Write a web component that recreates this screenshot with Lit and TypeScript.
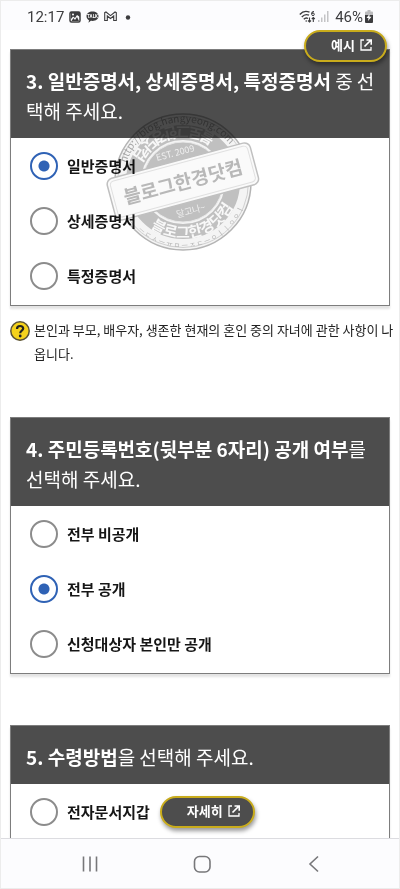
import { LitElement, html, css, svg } from "lit";
import { customElement, property } from "lit/decorators.js";

const sans = css`"Noto Sans CJK KR", "Noto Sans", sans-serif`;

@customElement("pill-button")
class PillButton extends LitElement {
  static styles = css`
    :host { display: inline-block; }
    .pill {
      display: flex; align-items: center; gap: 5px;
      height: 32px; padding: 0 13px 2px 25px;
      border: 2px solid #c9ac1c; border-radius: 16px;
      background: #4d4d4d; color: #fff;
      font: 700 13px/20px ${sans};
      box-shadow: 1px 3px 4px rgba(0, 0, 0, 0.4);
    }
    .icon { width: 12px; height: 12px; display: block; }
  `;
  render() {
    return html`<button class="pill" type="button">
      <slot></slot>
      <svg class="icon" viewBox="0 0 12 12" fill="none" stroke="#fff" aria-hidden="true">
        <path d="M4 1H1v10h10V8" stroke-width="1.3" />
        <path d="M4.500 7.500 10.500 1.500M6.500 1h4.800v4.800" stroke-width="1.7" />
      </svg>
    </button>`;
  }
}

@customElement("blog-stamp")
class BlogStamp extends LitElement {
  static styles = css`
    :host { display: block; pointer-events: none; mix-blend-mode: multiply; }
    .stamp { display: block; width: 100%; }
    text { font-family: ${sans}; text-anchor: middle; }
  `;
  render() {
    return html`<svg class="stamp" viewBox="0 0 160 150" aria-hidden="true">
      <defs>
        <path id="outerTop" d="M20 72A60 60 0 0 1 140 72" />
        <path id="outerLow" d="M14 72A66 66 0 0 0 146 72" />
        <path id="ring" d="M24 72A56 56 0 0 0 136 72" />
      </defs>
      <circle cx="80" cy="72" r="68" fill="#f4f4f4" stroke="#b4b4b4" stroke-width="1.5" />
      <circle cx="80" cy="72" r="65.5" fill="none" stroke="#d0d0d0" stroke-width="1" />
      <circle cx="80" cy="72" r="49.5" fill="none" stroke="#c0c0c0" stroke-width="15" />
      <circle cx="80" cy="72" r="40" fill="#c0c0c0" stroke="#e8e8e8" stroke-width="1" />
      <text font-size="10" fill="#a4a4a4" transform="rotate(-10 80 72)"><textPath href="#outerTop" startOffset="50%">http://blog.hangyeong.com</textPath></text>
      <text font-size="7" fill="#b4b4b4" transform="rotate(-12 80 72)"><textPath href="#outerLow" startOffset="50%">ㅡ ㄷ ㅅ ㅡ ㅠ ㅁ ㅡ ㅈ ㄷ ㅡ ㅇ ㅣ ㅣ ㅇ ㅇ ㅣ</textPath></text>
      ${[-14, 166].map((a) => svg`<text font-size="15" font-weight="700" fill="#f8f8f8" transform=${`rotate(${a} 80 72)`}><textPath href="#ring" startOffset="50%">블로그한경닷컴</textPath></text>`)}
      <g transform="rotate(-15 80 72)">
        <text x="80" y="45" font-size="9" fill="#efefef">EST. 2009</text>
        <text x="80" y="105" font-size="9" fill="#efefef">달고나~</text>
        <rect x="6" y="50" width="148" height="43" rx="6" fill="#fafafa" stroke="#c0c0c0" stroke-width="1.5" />
        <rect x="9" y="53" width="142" height="37" rx="4" fill="none" stroke="#e0e0e0" stroke-width="1" />
        <text x="80" y="79" font-size="19" font-weight="700" fill="#b8b8b8">블로그한경닷컴</text>
      </g>
    </svg>`;
  }
}

interface Option { label: string; checked?: boolean; more?: string; }

@customElement("question-card")
class QuestionCard extends LitElement {
  @property() strong = "";
  @property() rest = "";
  @property({ attribute: false }) options: Option[] = [];
  static styles = css`
    :host { display: block; }
    * { box-sizing: border-box; }
    .card {
      padding-bottom: 2px;
      border: 1px solid #7d7d7d; background: #fff;
      box-shadow: 0 3px 2px #e4e4e4;
    }
    .title {
      margin: 0; padding: 16px 14px 12px 15px;
      background: #4d4d4d; color: #fff;
      font: 400 19px/30px ${sans};
      word-break: break-all;
    }
    .title strong { font-weight: 700; }
    .row { display: flex; align-items: center; height: 55px; padding-left: 19px; gap: 10px; }
    .option { display: flex; align-items: center; gap: 9px; font: 700 15px/24px ${sans}; color: #161616; }
    .radio {
      appearance: none; margin: 0; width: 28px; height: 28px;
      border: 2px solid #8c8c8c; border-radius: 50%; background: #fff;
    }
    .radio:checked { border-color: #2f62b5; background: radial-gradient(circle, #2f62b5 5px, #fff 6px); }
  `;
  render() {
    return html`<section class="card" role="radiogroup" aria-labelledby="title">
      <h2 class="title" id="title"><strong>${this.strong}</strong>${this.rest}</h2>
      ${this.options.map((o) => html`<div class="row">
        <label class="option"><input class="radio" type="radio" name="choice" ?checked=${o.checked} />${o.label}</label>
        ${o.more ? html`<pill-button>${o.more}</pill-button>` : null}
      </div>`)}
    </section>`;
  }
}

@customElement("app-root")
class AppRoot extends LitElement {
  static styles = css`
    :host { display: block; color: #222; font-family: ${sans}; }
    * { box-sizing: border-box; }
    .screen {
      display: grid; grid-template-rows: auto 1fr auto; height: 100vh;
      border: 1px solid #ececec; background: #fff;
    }
    .status {
      display: flex; align-items: center; justify-content: space-between;
      height: 29px; padding: 2px 26px 0 26px; background: #fcfcfe;
      font: 400 15px/20px Roboto, sans-serif; color: #3c3c3e;
    }
    .group { display: flex; align-items: center; gap: 5px; }
    .group svg { display: block; }
    .right { gap: 2px; }
    .percent { padding-left: 4px; }
    .content { overflow: hidden; padding: 19px 9px 0; }
    .first { position: relative; }
    .example { position: absolute; right: 3px; top: -19px; z-index: 1; }
    .stamp { position: absolute; left: 93px; top: 61px; width: 160px; }
    .help {
      display: flex; gap: 4px; margin: 12px -8px 51px 0;
      font-size: 13px; line-height: 24px; color: #222;
      word-break: break-all;
    }
    .help p { margin: 0; }
    .mark { flex: none; width: 20px; height: 20px; margin-top: 3px; }
    .gap { margin-bottom: 51px; }
    .nav {
      display: flex; justify-content: space-between; align-items: center;
      height: 50px; padding: 0 72px 0 76px;
      background: #fcfcfe; border-top: 1px solid #dcdce0;
    }
    .key { padding: 0; border: 0; background: none; width: 26px; height: 26px; }
    .key svg { display: block; width: 26px; height: 26px; fill: none; stroke: #77777a; stroke-width: 1.6; }
  `;
  render() {
    return html`<div class="screen">
      <header class="status">
        <div class="group">
          <span>12:17</span>
          <svg width="12" height="12" viewBox="0 0 12 12"><rect x="1" y="1" width="10" height="10" rx="1.5" fill="none" stroke="#3c3c3e" stroke-width="1.5" /><path d="M1 1h10v5L8 4 6 7 4 5.500 2 8V3z" fill="#3c3c3e" /><path d="M2.500 10 4.500 7l1.500 2 2-3 2 4z" fill="#3c3c3e" /><circle cx="4" cy="3.500" r="1" fill="#fff" /></svg>
          <svg width="13" height="12" viewBox="0 0 13 12"><path d="M6.500 .5c3.500 0 6 2 6 4.700s-2.500 4.700-6 4.700c-.6 0-1.200 0-1.700-.1L2.500 11.700l.5-2.500C1.500 8.300.5 6.900.5 5.200.5 2.500 3 .5 6.500 .5z" fill="#3c3c3e" /><text x="6.500" y="7" font-size="4.500" font-weight="700" font-family="Roboto" fill="#fff" text-anchor="middle">TALK</text></svg>
          <svg width="13" height="11" viewBox="0 0 13 11" fill="none" stroke="#3c3c3e" stroke-width="1.100"><path d="M.7 9.500V1.700L2 1l4.500 3.600L11 1l1.300.7v7.800H9.700V5L6.500 7.500 3.300 5v4.500z" /></svg>
          <svg width="16" height="6" viewBox="0 0 16 6"><circle cx="6" cy="3.500" r="2.200" fill="#3c3c3e" /></svg>
        </div>
        <div class="group right">
          <svg width="17" height="13" viewBox="0 0 17 13" fill="none" stroke="#3c3c3e" stroke-width="1.400"><path d="M.8 4.500C3.500 1.400 7.500 .9 10.500 2.200M2.800 7C5 4.600 7.800 4.200 10 5.200M4.800 9.300C6 8 7.600 7.700 9 8.500" /><circle cx="7.200" cy="11" r=".8" fill="#3c3c3e" stroke="none" /><path d="M15 1.500c-1.800 0-2.300 1-2.300 2.600M10.500 7.500v4.500M9 10.500 10.500 12 12 10.500M14.300 12V7.500M12.800 9l1.500-1.500L15.800 9" stroke-width="1.100" /><circle cx="14" cy="4.300" r="1.300" stroke-width="1" /></svg>
          <svg width="11" height="11" viewBox="0 0 11 11" fill="#c4c4c6"><path d="M0 9h1.500v2H0zM3 6.500h1.500V11H3zM6 3.500h1.500V11H6zM9 0h1.500v11H9z" /></svg>
          <span class="percent">46%</span>
          <svg width="8" height="13" viewBox="0 0 8 13"><path d="M2.500 0h3v1.500H7q1 0 1 1V6H0V2.500q0-1 1-1h1.500z" fill="#bcbcbe" /><path d="M0 5h8v7q0 1-1 1H1q-1 0-1-1z" fill="#3c3c3e" /><path d="M4.500 4 1.500 8h2L3 11l3.500-4.200h-2z" fill="#fff" /></svg>
        </div>
      </header>
      <main class="content">
        <div class="first">
          <question-card strong="3. 일반증명서, 상세증명서, 특정증명서" rest=" 중 선택해 주세요."
            .options=${[{ label: "일반증명서", checked: true }, { label: "상세증명서" }, { label: "특정증명서" }]}></question-card>
          <blog-stamp class="stamp"></blog-stamp>
          <pill-button class="example">예시</pill-button>
        </div>
        <div class="help">
          <svg class="mark" viewBox="0 0 20 20" aria-hidden="true"><circle cx="10" cy="10" r="9.200" fill="#f5d21c" stroke="#5a5236" stroke-width="1.500" /><path d="M7 8c0-4 6.200-3.800 6.200-.5 0 2.200-3 2.200-3 4.700" fill="none" stroke="#222" stroke-width="2.200" /><circle cx="10.200" cy="15" r="1.400" fill="#222" /></svg>
          <p>본인과 부모, 배우자, 생존한 현재의 혼인 중의 자녀에 관한 사항이 나옵니다.</p>
        </div>
        <question-card class="gap" strong="4. 주민등록번호(뒷부분 6자리) 공개 여부" rest="를 선택해 주세요."
          .options=${[{ label: "전부 비공개" }, { label: "전부 공개", checked: true }, { label: "신청대상자 본인만 공개" }]}></question-card>
        <question-card strong="5. 수령방법" rest="을 선택해 주세요."
          .options=${[{ label: "전자문서지갑", more: "자세히" }]}></question-card>
      </main>
      <nav class="nav">
        <button class="key" type="button" aria-label="최근 앱"><svg viewBox="0 0 26 26"><path d="M6.500 5.500v15M13 5.500v15M19.500 5.500v15" /></svg></button>
        <button class="key" type="button" aria-label="홈"><svg viewBox="0 0 26 26"><rect x="5.500" y="5.500" width="15.500" height="15.500" rx="5" /></svg></button>
        <button class="key" type="button" aria-label="뒤로"><svg viewBox="0 0 26 26"><path d="M17 5.500 9 13l8 7.500" /></svg></button>
      </nav>
    </div>`;
  }
}
